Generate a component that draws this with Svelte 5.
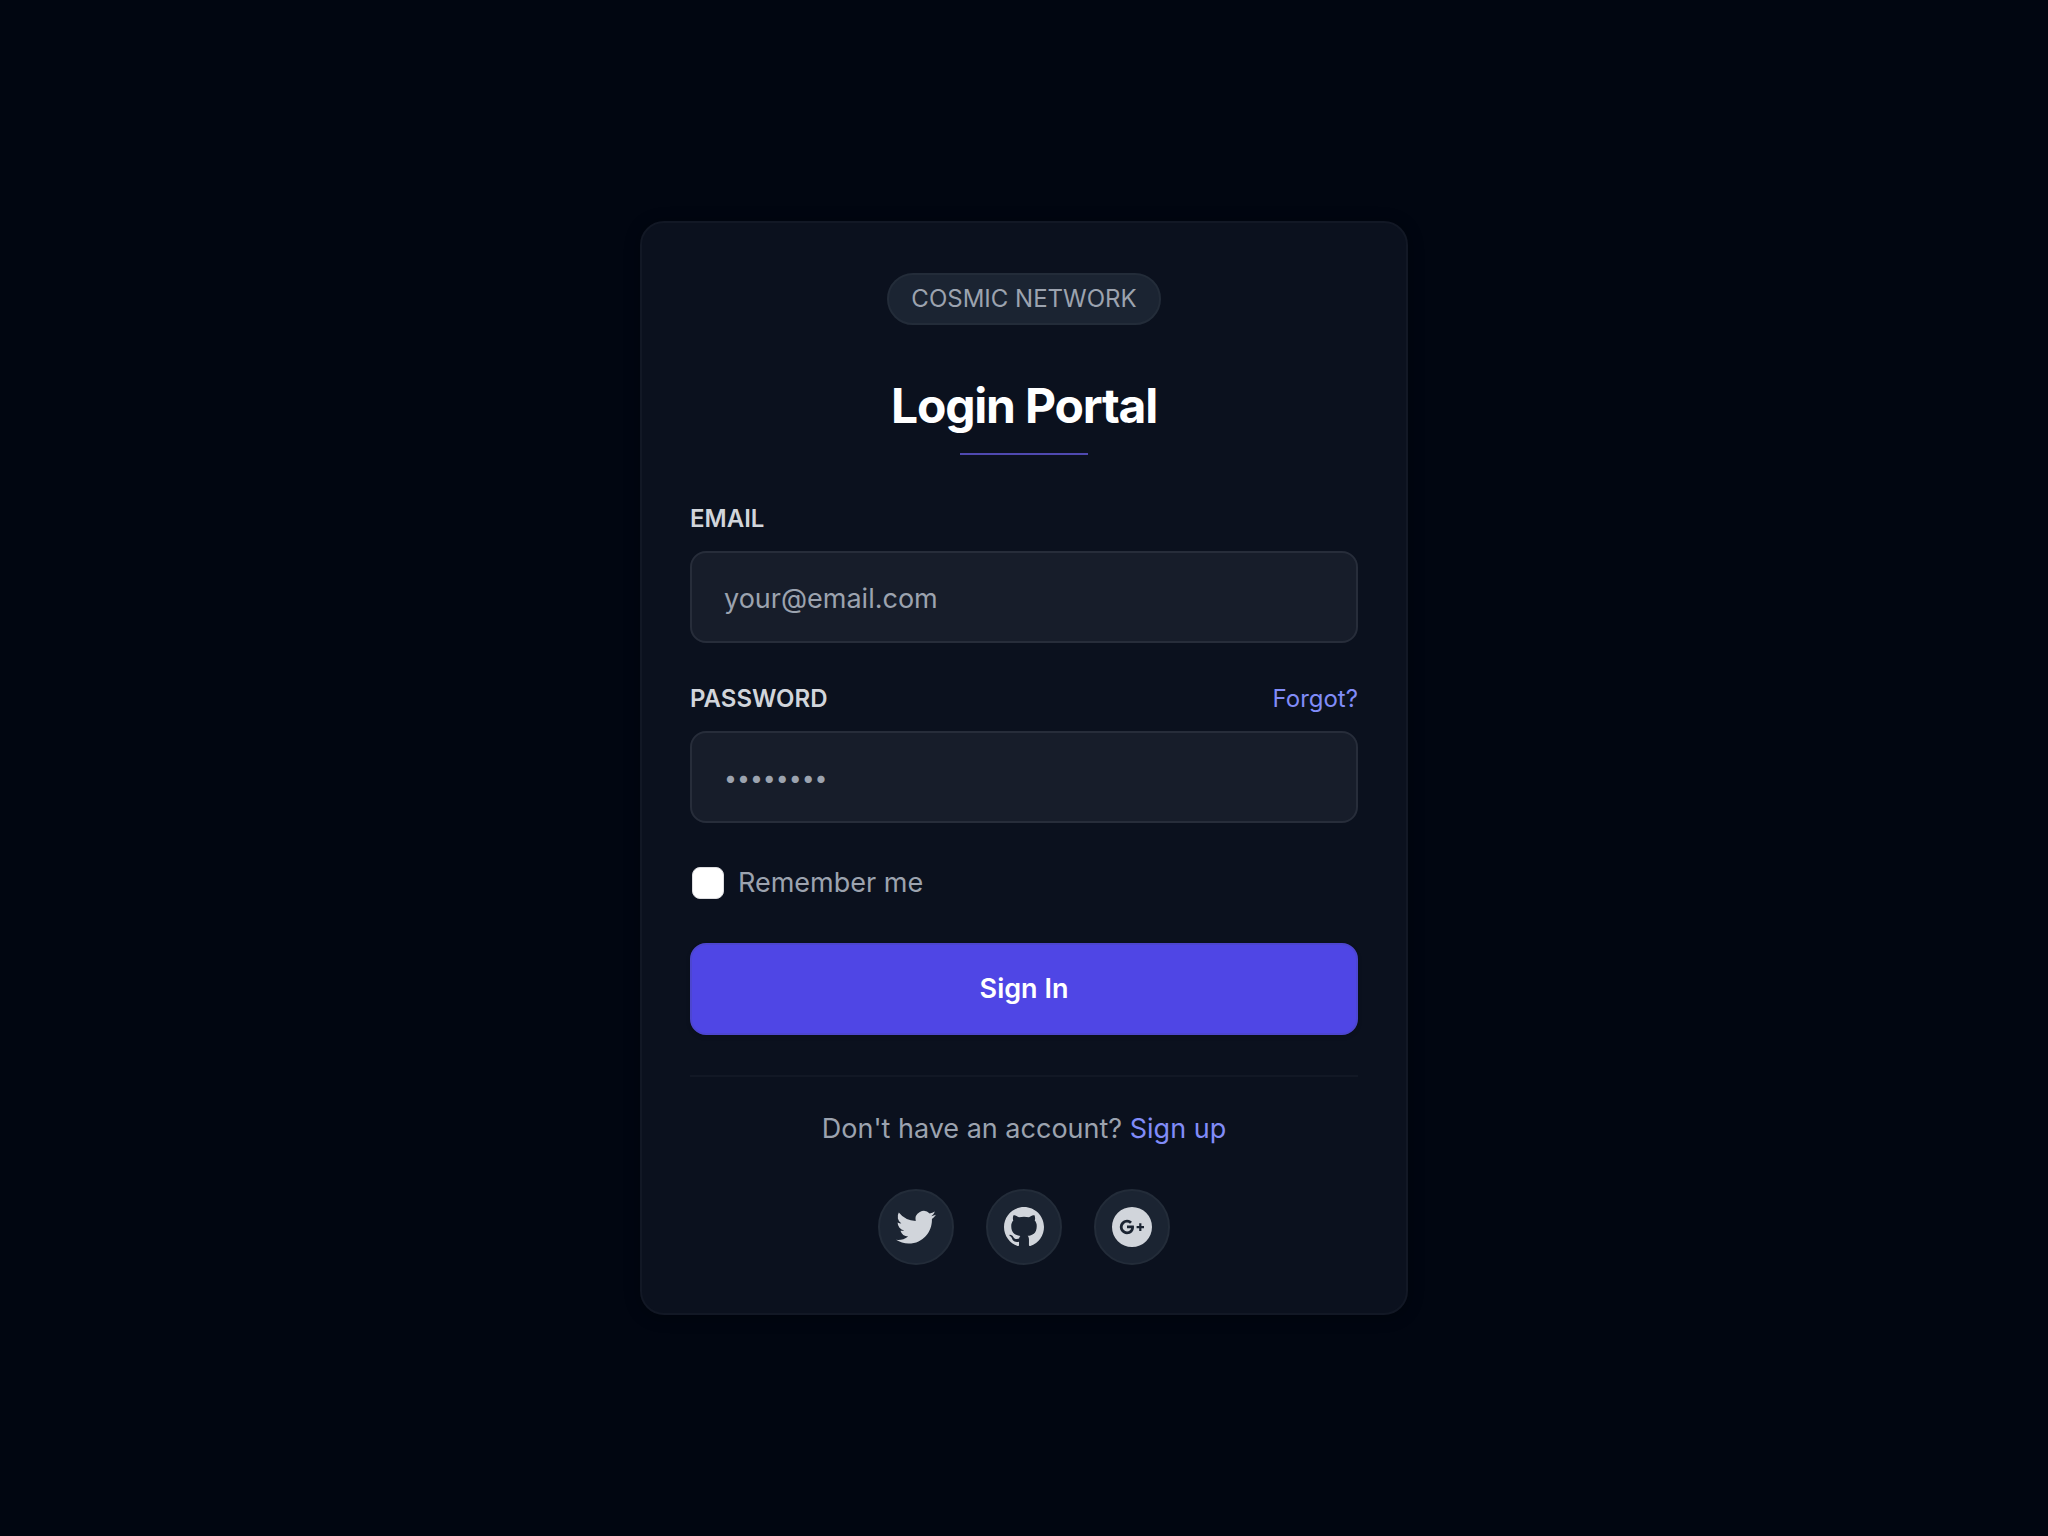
<script>
	let email = '';
	let password = '';
	let remember = false;

	const socials = [
		{
			name: 'Twitter',
			path: 'M8.29 20.251c7.547 0 11.675-6.253 11.675-11.675 0-.178 0-.355-.012-.53A8.348 8.348 0 0022 5.92a8.19 8.19 0 01-2.357.646 4.118 4.118 0 001.804-2.27 8.224 8.224 0 01-2.605.996 4.107 4.107 0 00-6.993 3.743 11.65 11.65 0 01-8.457-4.287 4.106 4.106 0 001.27 5.477A4.072 4.072 0 012.8 9.713v.052a4.105 4.105 0 003.292 4.022 4.095 4.095 0 01-1.853.07 4.108 4.108 0 003.834 2.85A8.233 8.233 0 012 18.407a11.616 11.616 0 006.29 1.84'
		},
		{
			name: 'GitHub',
			path: 'M12 2C6.477 2 2 6.484 2 12.017c0 4.425 2.865 8.18 6.839 9.504.5.092.682-.217.682-.483 0-.237-.008-.868-.013-1.703-2.782.605-3.369-1.343-3.369-1.343-.454-1.158-1.11-1.466-1.11-1.466-.908-.62.069-.608.069-.608 1.003.07 1.531 1.032 1.531 1.032.892 1.53 2.341 1.088 2.91.832.092-.647.35-1.088.636-1.338-2.22-.253-4.555-1.113-4.555-4.951 0-1.093.39-1.988 1.029-2.688-.103-.253-.446-1.272.098-2.65 0 0 .84-.27 2.75 1.026A9.564 9.564 0 0112 6.844c.85.004 1.705.115 2.504.337 1.909-1.296 2.747-1.027 2.747-1.027.546 1.379.202 2.398.1 2.651.64.7 1.028 1.595 1.028 2.688 0 3.848-2.339 4.695-4.566 4.943.359.309.678.92.678 1.855 0 1.338-.012 2.419-.012 2.747 0 .268.18.58.688.482A10.019 10.019 0 0022 12.017C22 6.484 17.522 2 12 2z'
		},
		{
			name: 'Google Plus',
			path: 'M12 2a10 10 0 100 20 10 10 0 000-20zM9.5 11.3v1.3h2.1c-.2 1-1 1.6-2.1 1.6a2.2 2.2 0 010-4.4c.6 0 1.1.2 1.5.6l1-1A3.6 3.6 0 109.5 15.6c2.1 0 3.5-1.5 3.5-3.6l-.1-.7zM18 11.5h-1.3v-1.4h-1.1v1.4h-1.3v1.1h1.3V14h1.1v-1.4H18z'
		}
	];
</script>

<main class="page">
	<section class="card">
		<header class="card__header">
			<span class="badge">COSMIC NETWORK</span>
			<h1 class="card__title">Login Portal</h1>
			<div class="card__rule"></div>
		</header>

		<form class="form" on:submit|preventDefault>
			<div class="field">
				<label class="field__label" for="email">EMAIL</label>
				<input class="field__input" id="email" type="email" placeholder="your@email.com" bind:value={email} />
			</div>

			<div class="field">
				<div class="field__row">
					<label class="field__label" for="password">PASSWORD</label>
					<a class="link link--small" href="#forgot">Forgot?</a>
				</div>
				<input class="field__input field__input--password" id="password" type="password" placeholder="••••••••" bind:value={password} />
			</div>

			<div class="remember">
				<input class="remember__box" id="remember" type="checkbox" bind:checked={remember} />
				<label for="remember">Remember me</label>
			</div>

			<button class="btn" type="submit">Sign In</button>
		</form>

		<footer class="card__footer">
			<p class="signup">Don't have an account? <a class="link" href="#signup">Sign up</a></p>
			<div class="socials">
				{#each socials as social}
					<a class="social" href="#social" aria-label={social.name}>
						<svg width="48" height="48" viewBox="0 0 24 24" xmlns="http://www.w3.org/2000/svg">
							<path fill="currentColor" fill-rule="evenodd" clip-rule="evenodd" d={social.path} />
						</svg>
					</a>
				{/each}
			</div>
		</footer>
	</section>
</main>

<style>
	:global(body) {
		background-color: #010611;
	}

	*,
	*::before,
	*::after {
		box-sizing: border-box;
	}

	.page {
		min-height: 100vh;
		display: flex;
		align-items: center;
		justify-content: center;
		font-family: Inter, 'Liberation Sans', sans-serif;
		font-size: 27px;
		line-height: 40px;
		color: #9ca3af;
	}

	.card {
		width: 100%;
		max-width: 768px;
		padding: 48px;
		background-color: #0b111e;
		border: 2px solid #121825;
		border-radius: 24px;
		box-shadow: 0 2px 16px rgba(0, 0, 0, 0.3);
	}

	.card__header {
		display: flex;
		flex-direction: column;
		align-items: center;
		padding-top: 2px;
	}

	.badge {
		padding: 8px 22px;
		font-size: 24px;
		line-height: 32px;
		background-color: #1b2432;
		border: 2px solid #232c39;
		border-radius: 26px;
	}

	.card__title {
		margin: 49px 0 15px;
		color: #fff;
		font-size: 48px;
		font-weight: 700;
		line-height: 64px;
		letter-spacing: -0.025em;
	}

	.card__rule {
		width: 128px;
		height: 2px;
		background-color: #4f49b0;
	}

	.form {
		display: flex;
		flex-direction: column;
		gap: 40px;
		margin-top: 48px;
	}

	.field {
		display: flex;
		flex-direction: column;
		gap: 16px;
	}

	.field__row {
		display: flex;
		justify-content: space-between;
	}

	.field__label {
		color: #d1d5db;
		font-size: 24px;
		font-weight: 600;
		line-height: 32px;
	}

	.field__input {
		width: 100%;
		height: 92px;
		padding: 2px 32px 0;
		font: inherit;
		color: #fff;
		background-color: #171d2a;
		border: 2px solid #272d3a;
		border-radius: 16px;
		outline: none;
	}

	.field__input::placeholder {
		color: #9ca3af;
		opacity: 1;
	}

	.field__input--password {
		font-size: 23px;
	}

	.link {
		color: #818cf8;
		text-decoration: none;
	}

	.link:hover {
		color: #a5b4fc;
	}

	.link--small {
		font-size: 24px;
		line-height: 32px;
	}

	.remember {
		display: flex;
		align-items: center;
		gap: 14px;
		padding-left: 2px;
	}

	.remember__box {
		appearance: none;
		width: 32px;
		height: 32px;
		margin: 0;
		background-color: #fff;
		border: 1px solid #dddde0;
		border-radius: 8px;
	}

	.remember__box:checked {
		background-color: #4f46e5;
	}

	.btn {
		height: 92px;
		font: inherit;
		font-weight: 600;
		color: #fff;
		background-color: #4f46e5;
		border: 2px solid #4d46d0;
		border-radius: 16px;
		box-shadow: 0 2px 4px rgba(0, 0, 0, 0.15);
		cursor: pointer;
	}

	.btn:hover {
		background-color: #4338ca;
	}

	.card__footer {
		margin-top: 40px;
		padding-top: 32px;
		border-top: 2px solid #121825;
	}

	.signup {
		margin: 0 0 40px;
		text-align: center;
	}

	.socials {
		display: flex;
		justify-content: center;
		gap: 32px;
	}

	.social {
		display: flex;
		padding: 12px;
		color: #d1d5db;
		background-color: #1b2432;
		border: 2px solid #232c39;
		border-radius: 50%;
	}

	.social:hover {
		color: #fff;
	}
</style>
